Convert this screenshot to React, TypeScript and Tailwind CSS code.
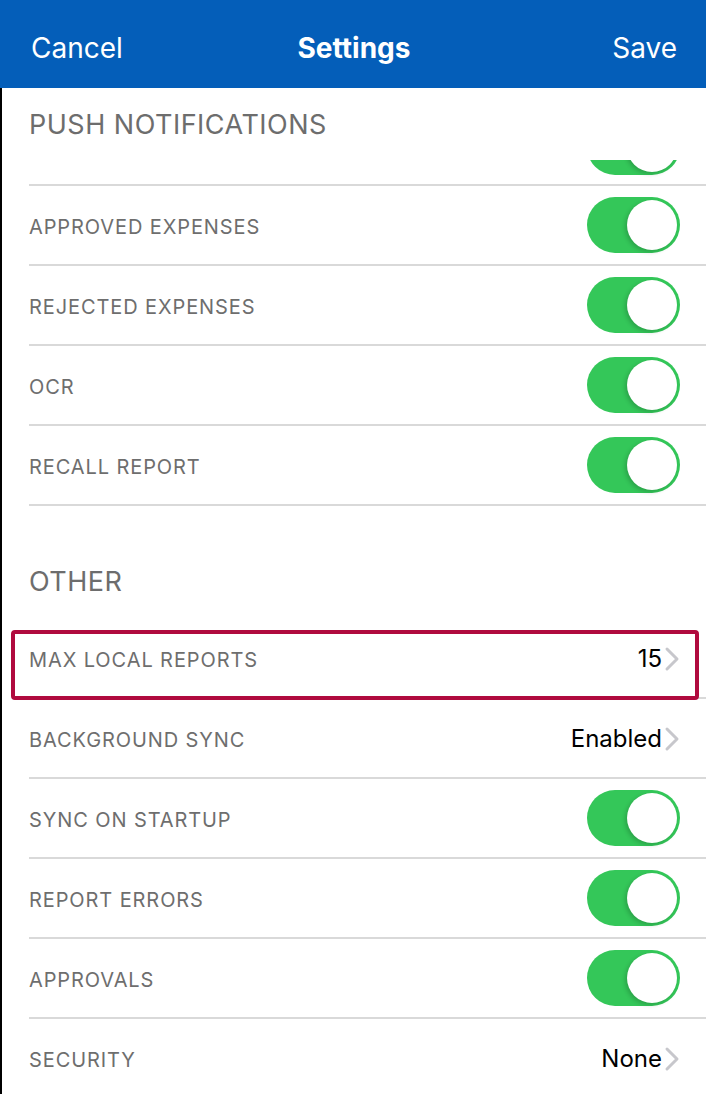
import React from 'react';

type Row = { label: string; value?: string; toggle?: boolean; highlight?: boolean };

const pushRows: Row[] = [
  { label: 'APPROVED EXPENSES', toggle: true },
  { label: 'REJECTED EXPENSES', toggle: true },
  { label: 'OCR', toggle: true },
  { label: 'RECALL REPORT', toggle: true },
];

const otherRows: Row[] = [
  { label: 'MAX LOCAL REPORTS', value: '15', highlight: true },
  { label: 'BACKGROUND SYNC', value: 'Enabled' },
  { label: 'SYNC ON STARTUP', toggle: true },
  { label: 'REPORT ERRORS', toggle: true },
  { label: 'APPROVALS', toggle: true },
  { label: 'SECURITY', value: 'None' },
];

function Toggle() {
  return (
    <div className="relative w-[93px] h-[56px] rounded-full bg-[#34c759] shrink-0">
      <div className="absolute right-[3px] top-[3px] w-[50px] h-[50px] rounded-full bg-white shadow-[-2px_2px_4px_rgba(0,0,0,0.18)]" />
    </div>
  );
}

function Chevron() {
  return (
    <svg width="16" height="26" viewBox="0 0 16 26" className="ml-[2px]">
      <path d="M3 3 L13 13 L3 23" fill="none" stroke="#c7c7cc" strokeWidth="3" strokeLinecap="round" strokeLinejoin="round" />
    </svg>
  );
}

function SettingRow({ row }: { row: Row }) {
  return (
    <div className="relative">
      <div className="ml-[27px] h-[80px] flex items-center justify-between pr-[26px] border-b-2 border-[#d9d9d9]">
        <span className="pt-[4px] text-[20px] tracking-[0.9px] text-[#6e6e6e]">{row.label}</span>
        {row.toggle ? (
          <Toggle />
        ) : (
          <div className="flex items-center pt-[2px] text-[24px] text-black">
            <span>{row.value}</span>
            <Chevron />
          </div>
        )}
      </div>
      {row.highlight && (
        <div className="absolute left-[9px] right-[7px] top-[11px] h-[70px] border-4 border-[#b00a3e] rounded-[4px]" />
      )}
    </div>
  );
}

export default function App() {
  return (
    <div className="w-[706px] h-[1094px] overflow-hidden bg-white" style={{ fontFamily: 'Inter, "Noto Sans", sans-serif' }}>
      <div className="h-[88px] bg-[#045eb9] grid grid-cols-3 items-center pt-[8px] pl-[31px] pr-[29px] text-white text-[28px]">
        <span className="justify-self-start">Cancel</span>
        <span className="justify-self-center font-bold">Settings</span>
        <span className="justify-self-end">Save</span>
      </div>

      <div className="border-l-2 border-black">
        <div className="h-[72px] flex items-center pt-[2px] pl-[27px] text-[27px] tracking-[0.5px] text-[#6d6d6d]">
          PUSH NOTIFICATIONS
        </div>
        <div className="ml-[27px] h-[26px] overflow-hidden flex justify-end pr-[26px] border-b-2 border-[#d9d9d9]">
          <div className="-mt-[41px]">
            <Toggle />
          </div>
        </div>
        {pushRows.map((r) => (
          <SettingRow key={r.label} row={r} />
        ))}

        <div className="h-[113px] flex items-end pb-[17px] pl-[27px] text-[27px] tracking-[0.5px] text-[#6d6d6d]">
          OTHER
        </div>
        {otherRows.map((r) => (
          <SettingRow key={r.label} row={r} />
        ))}
      </div>
    </div>
  );
}
